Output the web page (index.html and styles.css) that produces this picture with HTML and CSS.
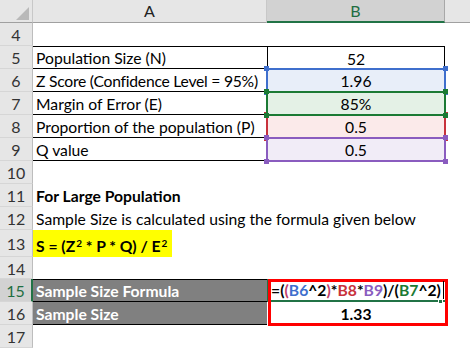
FILE: index.html
```html
<!DOCTYPE html>
<html>
<head>
<meta charset="utf-8">
<link rel="stylesheet" href="styles.css">
</head>
<body>
<div class="sheet">
  <div class="corner"><svg width="33" height="23" viewBox="0 0 33 23"><polygon points="29,7 29,20 16,20" fill="#b9b9b9"/></svg></div>
  <div class="colhead">A</div>
  <div class="colhead sel">B</div>
  <div class="colhead last"></div>

  <div class="rowhead">4</div><div class="cell"></div><div class="cell"></div><div class="cell"></div>

  <div class="rowhead">5</div>
  <div class="cell a bt bb">Population Size (N)</div>
  <div class="cell b box">52</div>
  <div class="cell"></div>

  <div class="rowhead">6</div>
  <div class="cell a bb tight">Z Score (Confidence Level = 95%)</div>
  <div class="cell b ref blue">1.96<span class="h tl"></span><span class="h tr"></span><span class="h bl"></span><span class="h br"></span></div>
  <div class="cell"></div>

  <div class="rowhead">7</div>
  <div class="cell a bb">Margin of Error (E)</div>
  <div class="cell b ref green">85%<span class="h tl"></span><span class="h tr"></span><span class="h bl"></span><span class="h br"></span></div>
  <div class="cell"></div>

  <div class="rowhead">8</div>
  <div class="cell a bb">Proportion of the population (P)</div>
  <div class="cell b ref red">0.5<span class="h tl"></span><span class="h tr"></span><span class="h bl"></span><span class="h br"></span></div>
  <div class="cell"></div>

  <div class="rowhead">9</div>
  <div class="cell a bb">Q value</div>
  <div class="cell b ref purple">0.5<span class="h tl"></span><span class="h tr"></span><span class="h bl"></span><span class="h br"></span></div>
  <div class="cell"></div>

  <div class="rowhead">10</div><div class="cell"></div><div class="cell"></div><div class="cell"></div>

  <div class="rowhead">11</div>
  <div class="cell a bold overflow">For Large Population</div>
  <div class="cell"></div><div class="cell"></div>

  <div class="rowhead">12</div>
  <div class="cell a overflow">Sample Size is calculated using the formula given below</div>
  <div class="cell"></div><div class="cell"></div>

  <div class="rowhead">13</div>
  <div class="cell formula-cell"><span class="hl">S = (Z<sup>2</sup>&nbsp;* P * Q) / E<sup>2</sup></span></div>
  <div class="cell"></div><div class="cell"></div>

  <div class="rowhead">14</div><div class="cell"></div><div class="cell"></div><div class="cell"></div>

  <div class="rowhead active">15</div>
  <div class="cell a dark bt bb">Sample Size Formula</div>
  <div class="cell b edit"><span class="fx"><span class="k">=(</span><span class="p">(</span><span class="c1">B6</span><span class="k">^2</span><span class="p">)</span><span class="k">*</span><span class="c3">B8</span><span class="k">*</span><span class="c4">B9</span><span class="k">)/(</span><span class="c2">B7</span><span class="k">^2)</span><span class="caret"></span></span><span class="fill-handle"></span><span class="redbox"></span></div>
  <div class="cell"></div>

  <div class="rowhead">16</div>
  <div class="cell a dark bb">Sample Size</div>
  <div class="cell b bold">1.33</div>
  <div class="cell"></div>

  <div class="rowhead">17</div><div class="cell"></div><div class="cell"></div><div class="cell"></div>
</div>
</body>
</html>
```

FILE: styles.css
```css
* { box-sizing: border-box; }
html, body { margin: 0; padding: 0; background: #fff; }
body {
  font-family: Lato, "Open Sans", sans-serif;
  font-size: 15.7px;
  color: #000;
  overflow: hidden;
}
.sheet {
  display: grid;
  grid-template-columns: 33px 234px 178px 25px;
  grid-template-rows: 23px repeat(9, 23px) 27px 22px 23px 23px 23px;
  width: 470px;
  height: 348px;
}
.corner {
  background: #e6e6e6;
  border-right: 1px solid #c8c8c8;
  border-bottom: 1px solid #a0a0a0;
}
.corner svg { display: block; }
.colhead {
  background: #e6e6e6;
  border-right: 1px solid #c8c8c8;
  border-bottom: 1px solid #a0a0a0;
  color: #222;
  font-size: 16px;
  display: flex;
  align-items: center;
  justify-content: center;
  padding-bottom: 1px;
}
.colhead.sel {
  background: #d2d2d2;
  color: #1e6e42;
  border-bottom: 2px solid #217346;
  border-right-color: #a8a8a8;
}
.colhead.last { border-right: none; }
.rowhead {
  background: #e6e6e6;
  border-right: 1px solid #bdbdbd;
  border-bottom: 1px solid #d6d6d6;
  color: #333;
  font-size: 16px;
  display: flex;
  align-items: center;
  justify-content: center;
  padding-top: 1px;
}
.rowhead.active {
  background: #d2d2d2;
  color: #1e6e42;
  border-right: 2px solid #217346;
}
.cell {
  position: relative;
  display: flex;
  align-items: center;
  white-space: nowrap;
  padding-top: 1px;
}
.cell.a { padding-left: 3px; }
.cell.b { justify-content: center; }
.tight { letter-spacing: -0.25px; }
.overflow { overflow: visible; z-index: 1; }
.bold { font-weight: 700; }
.bt { border-top: 1px solid #000; }
.bb { border-bottom: 1px solid #000; }
.box { border: 1px solid #000; border-bottom: none; }

.ref::after {
  content: "";
  position: absolute;
  left: -1px; right: -1px; top: -1px; bottom: -1px;
  border: 2px solid var(--c);
  pointer-events: none;
}
.ref { background: var(--f); }
.blue { --c: #3f6fcd; --f: #e8eef9; z-index: 2; }
.red { --c: #c8323c; --f: #fbeaea; z-index: 3; }
.green { --c: #1b7a34; --f: #e4f1e6; z-index: 4; }
.purple { --c: #8a5cbf; --f: #f1ecf7; z-index: 5; }
.h {
  position: absolute;
  width: 5px; height: 5px;
  background: var(--c);
  z-index: 1;
}
.h.tl { left: -3px; top: -3px; }
.h.tr { right: -3px; top: -3px; }
.h.bl { left: -3px; bottom: -3px; }
.h.br { right: -3px; bottom: -3px; }

.formula-cell { padding-left: 0; align-items: stretch; padding-top: 0; }
.hl {
  background: #ffff00;
  font-weight: 700;
  padding: 4px 5px 0 3px;
  display: flex;
  align-items: center;
}
.hl sup { font-size: 10px; position: relative; top: -3px; vertical-align: top; line-height: 1; margin-left: 1px; }

.dark {
  background: #808080;
  color: #fff;
  font-weight: 700;
}
.edit {
  justify-content: flex-start;
  font-weight: 700;
  padding-left: 2px;
  border-left: 1px solid #217346;
  border-bottom: 2px solid #217346;
  z-index: 6;
}
.fx { display: flex; align-items: center; position: relative; z-index: 2; }
.k { color: #000; }
.p { color: #c0406a; }
.c1 { color: #3f6fcd; }
.c2 { color: #1b7a34; }
.c3 { color: #c8323c; }
.c4 { color: #8a5cbf; }
.caret {
  display: inline-block;
  width: 1px;
  height: 18px;
  background: #000;
  margin-left: 2px;
}
.fill-handle {
  position: absolute;
  right: 2px;
  bottom: -4px;
  width: 5px;
  height: 5px;
  background: #217346;
  border: 1px solid #fff;
}
.redbox {
  position: absolute;
  left: 0; top: 0;
  width: 180px;
  height: 47px;
  border: 3px solid #ff0000;
  pointer-events: none;
}
```
